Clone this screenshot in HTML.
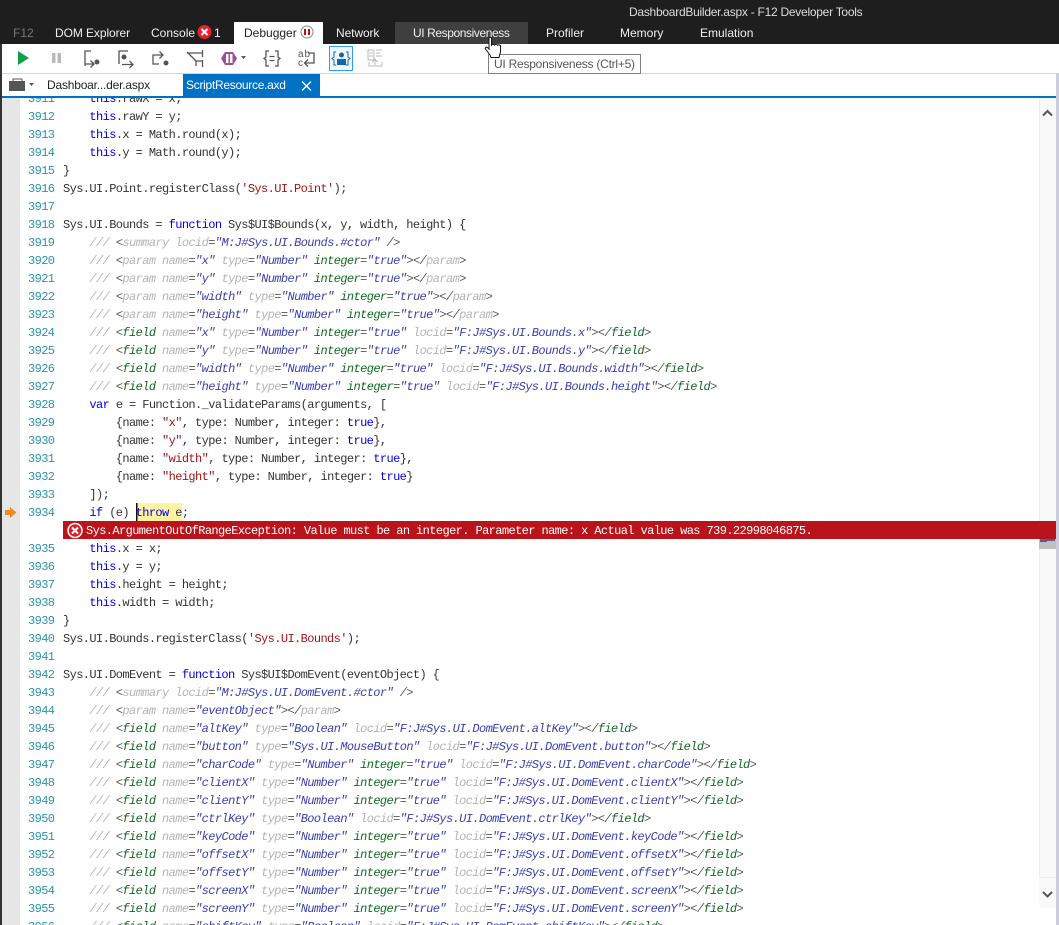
<!DOCTYPE html>
<html><head><meta charset="utf-8"><title>DashboardBuilder.aspx - F12 Developer Tools</title>
<style>
html,body{margin:0;padding:0;background:#fff;width:1059px;height:925px;overflow:hidden}
body{position:relative;font:12px "Liberation Sans",sans-serif}
.a{position:absolute;white-space:nowrap}
.tb{top:26px;height:14px;line-height:14px;color:#f0f0f0;font-size:12px}
#code{position:absolute;left:0;top:98px;width:1059px;height:827px;overflow:hidden;font:12px/18px "Liberation Mono",monospace;letter-spacing:-.6px;color:#333}
#code p{margin:0;height:18px;padding-left:63px;position:relative;white-space:pre}
#code p:first-child{margin-top:-8px}
#code b{position:absolute;left:28px;top:0;font-weight:400;font-style:normal;color:#2b91af}
i{font-style:normal;color:#0000e6}
q{quotes:none;color:#a31515}
.d{font-style:italic;color:#555}
u{text-decoration:none;color:#b4b4b4}
s{text-decoration:none;color:#0f6a1e}
em{color:#3a3fb0}
</style></head><body>
<div class="a" style="left:0;top:0;width:1059px;height:44px;background:#1e1e1e"></div>
<div class="a" style="left:234px;top:22px;width:89px;height:22px;background:#fff"></div>
<div class="a" style="left:395px;top:22px;width:133px;height:22px;background:#3f3f3f"></div>
<div class="a" style="left:629px;top:5px;color:#ddd;line-height:14px;letter-spacing:-.26px">DashboardBuilder.aspx - F12 Developer Tools</div>
<div class="a tb" style="left:13px;color:#777">F12</div>
<div class="a tb" style="left:55px;letter-spacing:-.08px">DOM Explorer</div>
<div class="a tb" style="left:151px">Console</div>
<div class="a tb" style="left:214px">1</div>
<div class="a tb" style="left:244px;color:#222">Debugger</div>
<div class="a tb" style="left:336px;letter-spacing:-.1px">Network</div>
<div class="a tb" style="left:413px;letter-spacing:-.41px">UI Responsiveness</div>
<div class="a tb" style="left:546px">Profiler</div>
<div class="a tb" style="left:620px">Memory</div>
<div class="a tb" style="left:700px">Emulation</div>
<div class="a" style="left:0;top:73px;width:1059px;height:1px;background:#d6d6d6"></div>
<div class="a" style="left:183px;top:74px;width:137px;height:22px;background:#0072c6"></div>
<div class="a" style="left:47px;top:78px;line-height:14px;color:#222;letter-spacing:-.2px">Dashboar...der.aspx</div>
<div class="a" style="left:186px;top:78px;line-height:14px;color:#fff;letter-spacing:-.28px">ScriptResource.axd</div>
<div class="a" style="left:2px;top:96px;width:1054px;height:2px;background:#0072c6"></div>
<div class="a" style="left:0;top:44px;width:2px;height:881px;background:#333"></div>
<div class="a" style="left:2px;top:98px;width:18px;height:827px;background:#e6e6e6"></div>
<div class="a" style="left:1056px;top:73px;width:3px;height:852px;background:#cccedb"></div>
<div class="a" style="left:137px;top:503px;width:45px;height:18px;background:#fff3a0"></div>
<svg class="a" style="left:0;top:0" width="1059" height="925" viewBox="0 0 1059 925" fill="none">
<rect x="1039" y="98" width="17" height="810" fill="#f9f9f9"/>
<rect x="1039" y="98" width="1" height="780" fill="#ececec"/>
<rect x="1040" y="877" width="16" height="1" fill="#ececec"/>
<rect x="1039" y="539" width="17" height="10" fill="#bfbfbf"/>
<rect x="1040" y="539" width="15" height="2" fill="#5a5a96"/>
<rect x="1040" y="541" width="7" height="1" fill="#c0392b"/>
<path d="M1043 115.500l4.500-4.500 4.500 4.500M1043 892l4.500 4.500 4.500-4.500" stroke="#555" stroke-width="2"/>
</svg>
<div id="code">
<p><b>3911</b>    <i>this</i>.rawX = x;</p>
<p><b>3912</b>    <i>this</i>.rawY = y;</p>
<p><b>3913</b>    <i>this</i>.x = Math.round(x);</p>
<p><b>3914</b>    <i>this</i>.y = Math.round(y);</p>
<p><b>3915</b>}</p>
<p><b>3916</b>Sys.UI.Point.registerClass(<q>'Sys.UI.Point'</q>);</p>
<p><b>3917</b></p>
<p><b>3918</b>Sys.UI.Bounds = <i>function</i> Sys$UI$Bounds(x, y, width, height) {</p>
<p class="d"><b>3919</b>    <u>///</u> &lt;<u>summary</u> <u>locid</u>=<em>"M:J#Sys.UI.Bounds.#ctor"</em> /&gt;</p>
<p class="d"><b>3920</b>    <u>///</u> &lt;<u>param</u> <u>name</u>=<em>"x"</em> <u>type</u>=<em>"Number"</em> <s>integer</s>=<em>"true"</em>&gt;&lt;/<u>param</u>&gt;</p>
<p class="d"><b>3921</b>    <u>///</u> &lt;<u>param</u> <u>name</u>=<em>"y"</em> <u>type</u>=<em>"Number"</em> <s>integer</s>=<em>"true"</em>&gt;&lt;/<u>param</u>&gt;</p>
<p class="d"><b>3922</b>    <u>///</u> &lt;<u>param</u> <u>name</u>=<em>"width"</em> <u>type</u>=<em>"Number"</em> <s>integer</s>=<em>"true"</em>&gt;&lt;/<u>param</u>&gt;</p>
<p class="d"><b>3923</b>    <u>///</u> &lt;<u>param</u> <u>name</u>=<em>"height"</em> <u>type</u>=<em>"Number"</em> <s>integer</s>=<em>"true"</em>&gt;&lt;/<u>param</u>&gt;</p>
<p class="d"><b>3924</b>    <u>///</u> &lt;<s>field</s> <u>name</u>=<em>"x"</em> <u>type</u>=<em>"Number"</em> <s>integer</s>=<em>"true"</em> <u>locid</u>=<em>"F:J#Sys.UI.Bounds.x"</em>&gt;&lt;/<s>field</s>&gt;</p>
<p class="d"><b>3925</b>    <u>///</u> &lt;<s>field</s> <u>name</u>=<em>"y"</em> <u>type</u>=<em>"Number"</em> <s>integer</s>=<em>"true"</em> <u>locid</u>=<em>"F:J#Sys.UI.Bounds.y"</em>&gt;&lt;/<s>field</s>&gt;</p>
<p class="d"><b>3926</b>    <u>///</u> &lt;<s>field</s> <u>name</u>=<em>"width"</em> <u>type</u>=<em>"Number"</em> <s>integer</s>=<em>"true"</em> <u>locid</u>=<em>"F:J#Sys.UI.Bounds.width"</em>&gt;&lt;/<s>field</s>&gt;</p>
<p class="d"><b>3927</b>    <u>///</u> &lt;<s>field</s> <u>name</u>=<em>"height"</em> <u>type</u>=<em>"Number"</em> <s>integer</s>=<em>"true"</em> <u>locid</u>=<em>"F:J#Sys.UI.Bounds.height"</em>&gt;&lt;/<s>field</s>&gt;</p>
<p><b>3928</b>    <i>var</i> e = Function._validateParams(arguments, [</p>
<p><b>3929</b>        {name: <q>"x"</q>, type: Number, integer: <i>true</i>},</p>
<p><b>3930</b>        {name: <q>"y"</q>, type: Number, integer: <i>true</i>},</p>
<p><b>3931</b>        {name: <q>"width"</q>, type: Number, integer: <i>true</i>},</p>
<p><b>3932</b>        {name: <q>"height"</q>, type: Number, integer: <i>true</i>}</p>
<p><b>3933</b>    ]);</p>
<p><b>3934</b>    <i>if</i> (e) <i>throw</i> e;</p>
<p style="color:#fff"><span class="a" style="left:63px;top:-1px;width:993px;height:18px;background:#b9131b"></span><span class="a" style="left:86px;top:0">Sys.ArgumentOutOfRangeException: Value must be an integer. Parameter name: x Actual value was 739.22998046875.</span></p>
<p><b>3935</b>    <i>this</i>.x = x;</p>
<p><b>3936</b>    <i>this</i>.y = y;</p>
<p><b>3937</b>    <i>this</i>.height = height;</p>
<p><b>3938</b>    <i>this</i>.width = width;</p>
<p><b>3939</b>}</p>
<p><b>3940</b>Sys.UI.Bounds.registerClass(<q>'Sys.UI.Bounds'</q>);</p>
<p><b>3941</b></p>
<p><b>3942</b>Sys.UI.DomEvent = <i>function</i> Sys$UI$DomEvent(eventObject) {</p>
<p class="d"><b>3943</b>    <u>///</u> &lt;<u>summary</u> <u>locid</u>=<em>"M:J#Sys.UI.DomEvent.#ctor"</em> /&gt;</p>
<p class="d"><b>3944</b>    <u>///</u> &lt;<u>param</u> <u>name</u>=<em>"eventObject"</em>&gt;&lt;/<u>param</u>&gt;</p>
<p class="d"><b>3945</b>    <u>///</u> &lt;<s>field</s> <u>name</u>=<em>"altKey"</em> <u>type</u>=<em>"Boolean"</em> <u>locid</u>=<em>"F:J#Sys.UI.DomEvent.altKey"</em>&gt;&lt;/<s>field</s>&gt;</p>
<p class="d"><b>3946</b>    <u>///</u> &lt;<s>field</s> <u>name</u>=<em>"button"</em> <u>type</u>=<em>"Sys.UI.MouseButton"</em> <u>locid</u>=<em>"F:J#Sys.UI.DomEvent.button"</em>&gt;&lt;/<s>field</s>&gt;</p>
<p class="d"><b>3947</b>    <u>///</u> &lt;<s>field</s> <u>name</u>=<em>"charCode"</em> <u>type</u>=<em>"Number"</em> <s>integer</s>=<em>"true"</em> <u>locid</u>=<em>"F:J#Sys.UI.DomEvent.charCode"</em>&gt;&lt;/<s>field</s>&gt;</p>
<p class="d"><b>3948</b>    <u>///</u> &lt;<s>field</s> <u>name</u>=<em>"clientX"</em> <u>type</u>=<em>"Number"</em> <s>integer</s>=<em>"true"</em> <u>locid</u>=<em>"F:J#Sys.UI.DomEvent.clientX"</em>&gt;&lt;/<s>field</s>&gt;</p>
<p class="d"><b>3949</b>    <u>///</u> &lt;<s>field</s> <u>name</u>=<em>"clientY"</em> <u>type</u>=<em>"Number"</em> <s>integer</s>=<em>"true"</em> <u>locid</u>=<em>"F:J#Sys.UI.DomEvent.clientY"</em>&gt;&lt;/<s>field</s>&gt;</p>
<p class="d"><b>3950</b>    <u>///</u> &lt;<s>field</s> <u>name</u>=<em>"ctrlKey"</em> <u>type</u>=<em>"Boolean"</em> <u>locid</u>=<em>"F:J#Sys.UI.DomEvent.ctrlKey"</em>&gt;&lt;/<s>field</s>&gt;</p>
<p class="d"><b>3951</b>    <u>///</u> &lt;<s>field</s> <u>name</u>=<em>"keyCode"</em> <u>type</u>=<em>"Number"</em> <s>integer</s>=<em>"true"</em> <u>locid</u>=<em>"F:J#Sys.UI.DomEvent.keyCode"</em>&gt;&lt;/<s>field</s>&gt;</p>
<p class="d"><b>3952</b>    <u>///</u> &lt;<s>field</s> <u>name</u>=<em>"offsetX"</em> <u>type</u>=<em>"Number"</em> <s>integer</s>=<em>"true"</em> <u>locid</u>=<em>"F:J#Sys.UI.DomEvent.offsetX"</em>&gt;&lt;/<s>field</s>&gt;</p>
<p class="d"><b>3953</b>    <u>///</u> &lt;<s>field</s> <u>name</u>=<em>"offsetY"</em> <u>type</u>=<em>"Number"</em> <s>integer</s>=<em>"true"</em> <u>locid</u>=<em>"F:J#Sys.UI.DomEvent.offsetY"</em>&gt;&lt;/<s>field</s>&gt;</p>
<p class="d"><b>3954</b>    <u>///</u> &lt;<s>field</s> <u>name</u>=<em>"screenX"</em> <u>type</u>=<em>"Number"</em> <s>integer</s>=<em>"true"</em> <u>locid</u>=<em>"F:J#Sys.UI.DomEvent.screenX"</em>&gt;&lt;/<s>field</s>&gt;</p>
<p class="d"><b>3955</b>    <u>///</u> &lt;<s>field</s> <u>name</u>=<em>"screenY"</em> <u>type</u>=<em>"Number"</em> <s>integer</s>=<em>"true"</em> <u>locid</u>=<em>"F:J#Sys.UI.DomEvent.screenY"</em>&gt;&lt;/<s>field</s>&gt;</p>
<p class="d"><b>3956</b>    <u>///</u> &lt;<s>field</s> <u>name</u>=<em>"shiftKey"</em> <u>type</u>=<em>"Boolean"</em> <u>locid</u>=<em>"F:J#Sys.UI.DomEvent.shiftKey"</em>&gt;&lt;/<s>field</s>&gt;</p>
</div>
<div class="a" style="left:488px;top:54px;width:151px;height:18px;border:1px solid #808080;background:#fff;color:#555;line-height:18px;text-indent:5px;letter-spacing:-.24px">UI Responsiveness (Ctrl+5)</div>
<svg class="a" style="left:0;top:0" width="1059" height="925" viewBox="0 0 1059 925" fill="none">
<!-- console error icon -->
<circle cx="204.500" cy="32" r="7" fill="#e5212e"/>
<path d="M201.500 29l6 6M207.500 29l-6 6" stroke="#fff" stroke-width="2"/>
<!-- debugger pause icon -->
<circle cx="307" cy="32" r="6" fill="#fff" stroke="#8a8a8a"/>
<path d="M305 29v6M309 29v6" stroke="#b5121b" stroke-width="2"/>
<!-- toolbar -->
<path d="M18 51l11 7-11 7z" fill="#129e4a"/>
<path d="M52 53h3.500v10H52zM57.500 53H61v10h-3.500z" fill="#b9b9b9"/>
<g stroke="#555" stroke-width="1.300">
<path d="M91 51h-6v15M85.500 64h8M90.500 60.500l3.500 3.500-3.500 3.500"/>
<path d="M128 51h-9v13M122 64.500h11M129.500 61l3.500 3.500-3.500 3.500"/>
<path d="M159 64h-6V55h10M159.500 51.500l3.500 3.500-3.500 3.500"/>
<path d="M187 52l9 9v5M187 53h15M196 61h6M202.500 50v7M202.500 60v7"/>
<path d="M269 51h-3v6l-2 1.500 2 1.500v6h3M275 51h3v6l2 1.500-2 1.500v6h-3M269.500 56.500h5M269.500 60.500h5"/>
<path d="M308 53h6v10h-9M308 59.500l-3.500 3.500 3.500 3.500"/>
</g>
<circle cx="97" cy="62" r="2.500" fill="#555"/><circle cx="124" cy="57" r="2.500" fill="#555"/><circle cx="166" cy="63" r="2.500" fill="#555"/>
<path d="M225 52h8l4 6.500-4 6.500h-8l-4-6.500z" fill="#9b4f96"/>
<path d="M226 54h2.500v9h-2.500zM230 54h2.500v9H230z" fill="#fff"/>
<path d="M241 56h5l-2.500 3z" fill="#555"/>
<text x="298" y="57" font-family="Liberation Sans" font-size="10" fill="#555" letter-spacing="1">ab</text>
<text x="298" y="66" font-family="Liberation Sans" font-size="10" fill="#555">c</text>
<rect x="329.500" y="46.500" width="23" height="24" fill="#f0f8fe" stroke="#3399ff"/>
<path d="M336 52h-2v5l-2 1.500 2 1.500v5h2M346 52h2v5l2 1.500-2 1.500v5h-2" stroke="#0b6ab0"/>
<circle cx="341.500" cy="55" r="2.500" fill="#0b6ab0"/>
<path d="M337 65v-6h9v6z" fill="#0b6ab0"/>
<path d="M368 50h6v10h-6zM376 50h6M376 53h4M376 56h6M369 53h4M369 56h4M369 62v4h13v-4M375 65v-5M372.500 62l2.500-3 2.500 3" stroke="#bbb"/>
<!-- tab row -->
<path d="M9 81h16v10H9z" fill="#555"/><path d="M13 81v-2h9v2" stroke="#555"/>
<path d="M29 83h5l-2.500 3z" fill="#555"/>
<path d="M302 81.500l9 9M311 81.500l-9 9" stroke="#fff" stroke-width="1.300"/>
<!-- execution arrow -->
<path d="M5 510h5v-3l6.500 5.500-6.500 5.500v-3H5z" fill="#f08a24"/>
<!-- caret -->
<rect x="136" y="503" width="1.500" height="18" fill="#111"/>
<!-- error icon in bar -->
<circle cx="75" cy="530.500" r="7" fill="#d8202a" stroke="#fff" stroke-width="1.500"/>
<path d="M72 527.500l6 6M78 527.500l-6 6" stroke="#fff" stroke-width="2"/>
<!-- hand cursor -->
<path d="M489 38.500c0-1.500 2.500-1.500 2.500 0V45c.5-.8 2.500-.8 3 0 .5-.8 2.500-.8 3 .3.500-.6 2.500-.6 3 .5V52l-1.500 5.500H491l-1-2.500-4.500-6c-.8-1.200.8-2.300 2-1.500l1.500 1.500z" fill="#fff" stroke="#111"/>
</svg>
</body></html>
